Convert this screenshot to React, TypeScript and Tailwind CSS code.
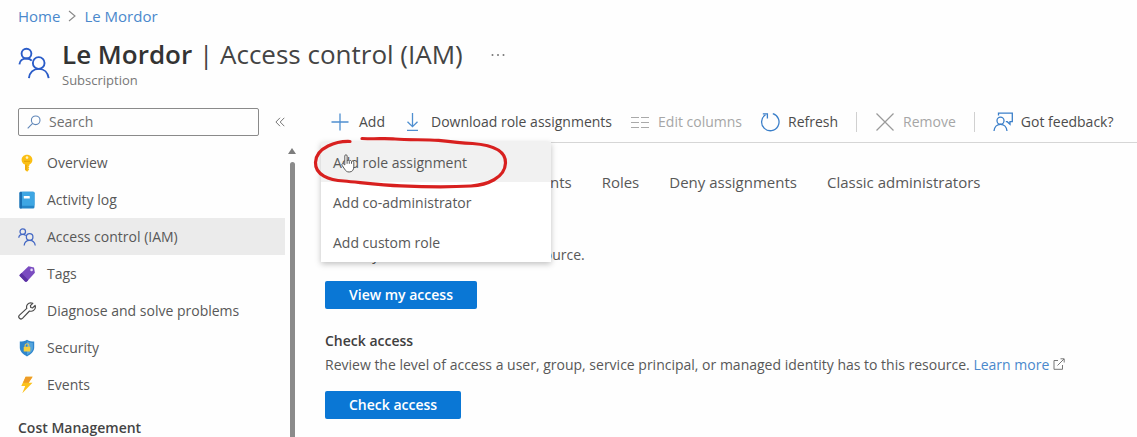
import type { ReactNode } from "react";

function PeopleIcon({ className, strokeWidth = 2 }: { className: string; strokeWidth?: number }) {
  return (
    <svg viewBox="0 0 34 34" className={className} fill="none" stroke="currentColor" strokeWidth={strokeWidth} aria-hidden="true">
      <circle cx="9" cy="7" r="5.2" />
      <path d="M1.500 18.500C1.800 14.500 5 12.200 9 12.200c2.200 0 4.200.7 5.600 2.200" />
      <circle cx="22" cy="17" r="6.2" />
      <path d="M11.600 33c.6-5.800 4.700-9.800 10.400-9.800S31.800 27.200 32.600 33" />
    </svg>
  );
}

function KeyIcon() {
  return (
    <svg viewBox="0 0 18 18" className="size-[18px]" aria-hidden="true">
      <path d="M9 .8c3.100 0 5.400 2.200 5.400 5.100 0 2.200-1.200 3.800-3 4.600v1l-1 1 1 1-1 1.100.8 1-2 2.200L7 15.900V10.500C5 9.800 3.600 8.100 3.600 5.900 3.600 3 5.900.8 9 .8Z" fill="#fbbf14" />
      <path d="M7.400 10.800h1.100v5.600l-1.100-.9Z" fill="#e49a0c" />
      <circle cx="9" cy="3.600" r="1.300" fill="#fff3c2" />
      <path d="M6 7.300h6" stroke="#e5a000" strokeWidth="1" />
    </svg>
  );
}

function LogIcon() {
  return (
    <svg viewBox="0 0 18 18" className="size-[18px]" aria-hidden="true">
      <rect x="1.500" y=".8" width="15" height="16.600" rx="1.500" fill="#2585c7" />
      <rect x="3.600" y=".8" width="12.900" height="14" rx="1" fill="#3ea6e3" />
      <rect x="1.500" y=".8" width="2.500" height="16.600" rx="1" fill="#1a6fb2" />
      <rect x="5.800" y="5" width="6" height="2.600" rx=".4" fill="#fff" />
    </svg>
  );
}

function TagIcon() {
  return (
    <svg viewBox="0 0 18 18" className="size-[18px]" aria-hidden="true">
      <path d="M10.500 1.300 16 2.400l.9 5.400-8 8.600c-.6.6-1.300.6-1.900 0L2 11.300c-.6-.6-.6-1.300 0-1.900Z" fill="#7a4cc0" />
      <path d="M2 9.400c-.6.6-.6 1.300 0 1.900l5 5.100c.6.6 1.300.6 1.900 0l1.400-1.500L3.500 8Z" fill="#5b32a3" />
      <circle cx="13.600" cy="4.900" r="1.300" fill="#e7dcf8" />
    </svg>
  );
}

function WrenchIcon() {
  return (
    <svg viewBox="0 0 18 18" className="size-[18px]" fill="none" stroke="#4b4b4b" strokeWidth="1.200" strokeLinejoin="round" aria-hidden="true">
      <path d="M14.800 1.300 12.400 3.700l.4 1.800 1.800.4 2.500-2.400c.6 2-.1 4.100-1.700 5.100-1.200.8-2.600.8-3.900.4l-6.800 7.200c-.9.9-2.300.9-3.200.1-.9-.9-.9-2.300 0-3.200l7.300-6.700c-.5-1.400-.2-2.900.7-4C10.800.9 12.900.5 14.800 1.300Z" />
    </svg>
  );
}

function ShieldIcon() {
  return (
    <svg viewBox="0 0 18 18" className="size-[18px]" aria-hidden="true">
      <path d="M9 .8c2.400 1.500 4.600 1.700 7.200 1.800v6c0 4-3.400 6.900-7.200 8.900-3.800-2-7.200-4.900-7.200-8.900v-6C4.400 2.500 6.600 2.300 9 .8Z" fill="#2f86cc" />
      <path d="M9 2.300c2 1.100 3.800 1.400 5.900 1.600v4.800c0 3.200-2.700 5.500-5.900 7.200Z" fill="#55a5dd" />
      <path d="M7.100 8V6.700a1.900 1.900 0 0 1 3.800 0V8" stroke="#e3c65b" strokeWidth="1.100" fill="none" />
      <rect x="5.700" y="7.800" width="6.600" height="4.800" rx=".6" fill="#f6cf3f" />
    </svg>
  );
}

function BoltIcon() {
  return (
    <svg viewBox="0 0 18 18" className="size-[18px]" aria-hidden="true">
      <path d="M7.600.8h7L10.600 6.700h3.900L4.300 17.300l2.900-7.200H3.300Z" fill="#fcc21c" />
      <path d="M7.600.8h7L10.600 6.700H5.100Z" fill="#ee9b28" />
    </svg>
  );
}

function SearchIcon() {
  return (
    <svg viewBox="0 0 14 14" className="size-[14px]" fill="none" stroke="#5f86b8" strokeWidth="1.100" aria-hidden="true">
      <circle cx="8.700" cy="5.300" r="4.300" />
      <path d="M5.600 8.400.7 13.300" />
    </svg>
  );
}

function PlusIcon() {
  return (
    <svg viewBox="0 0 20 20" className="size-5" stroke="#4f8fd0" strokeWidth="1.300" aria-hidden="true">
      <path d="M9 1.500v17M.5 10h17" />
    </svg>
  );
}

function DownloadIcon() {
  return (
    <svg viewBox="0 0 20 20" className="size-5" fill="none" stroke="#4f8fd0" strokeWidth="1.300" aria-hidden="true">
      <path d="M9.500 1v13.500M4.500 9.700l5 5 5-5M4 18.300h11" />
    </svg>
  );
}

function ColumnsIcon() {
  return (
    <svg viewBox="0 0 20 14" className="h-[14px] w-5" stroke="#a9a9a9" strokeWidth="1.100" aria-hidden="true">
      <path d="M1 2.500h8M11 2.500h8M1 7.500h8M11 7.500h8M1 12.500h8M11 12.500h8" />
    </svg>
  );
}

function RefreshIcon() {
  return (
    <svg viewBox="0 0 20 20" className="size-5" fill="none" stroke="#3b7fc9" strokeWidth="1.300" aria-hidden="true">
      <path d="M12.800 1.700A8.700 8.700 0 1 1 5.500 2.800" />
      <path d="M2.800 1.800h4.600v4.600" />
    </svg>
  );
}

function RemoveIcon() {
  return (
    <svg viewBox="0 0 20 20" className="size-5" stroke="#9a9a9a" strokeWidth="1.200" aria-hidden="true">
      <path d="m1.500 1.500 17 17M18.500 1.500l-17 17" />
    </svg>
  );
}

function FeedbackIcon() {
  return (
    <svg viewBox="0 0 20 20" className="size-5" fill="none" stroke="#3b7fc9" strokeWidth="1.300" aria-hidden="true">
      <circle cx="7.500" cy="8.700" r="3.500" />
      <path d="M1 19c.3-3.900 2.900-6.700 6.500-6.700s6.200 2.800 6.500 6.700" />
      <path d="M5.500 3.500V1.200h13.800v8.500h-2.300v2.600l-2.800-2.600h-1.400" />
    </svg>
  );
}

function ExternalIcon() {
  return (
    <svg viewBox="0 0 12 12" className="mb-1 inline-block size-3" fill="none" stroke="#777" strokeWidth="1" aria-hidden="true">
      <path d="M5 2.500H1v8.800h8.500V7M4.500 7.500l6.500-6.500M7.500.8h3.700v3.700" />
    </svg>
  );
}

function HandCursor() {
  return (
    <svg viewBox="0 0 14 19" className="pointer-events-none absolute left-5 top-3 h-[19px] w-[14px]" fill="#fff" stroke="#5a5a5a" strokeWidth="1" strokeLinejoin="round" aria-hidden="true">
      <path d="M3.800 11V2c0-1.700 2.300-1.700 2.300 0v5c.2-1.200 2-1.100 2.200.1.400-1 2-.8 2.200.4.500-.8 2.300-.5 2.300 1v4.300c0 3-1.500 5.200-4.600 5.200-2.300 0-3.400-1-4.600-2.900L1 11.200c-.6-1.200.7-2.100 1.600-1.300Z" />
      <path d="M6.100 7v2.800M8.300 7.200v2.600M10.500 7.800v2" />
    </svg>
  );
}

function Highlight() {
  return (
    <svg viewBox="0 0 200 56" className="pointer-events-none absolute -left-2 -top-1.5 h-14 w-[200px]" fill="none" stroke="#d8201f" strokeWidth="3.200" strokeLinecap="round" aria-hidden="true">
      <path d="M37 5.500C24 5 3 11 2.500 26.500 2 39 16 44 31 45c17 1.500 37 4.500 57 4.800 25 1.200 53 1.200 70 .2 16-1 34-8 34.500-23 .5-13-14-18-33-19.500-13-.8-22-1.800-34-3.200C110 3.500 95 4 82 3c-9-.8-20 .2-33-.5" />
    </svg>
  );
}

const sideItems: { label: string; icon: ReactNode; active?: boolean }[] = [
  { label: "Overview", icon: <KeyIcon /> },
  { label: "Activity log", icon: <LogIcon /> },
  { label: "Access control (IAM)", icon: <PeopleIcon className="size-[18px] text-[#4468c4]" strokeWidth={2.400} />, active: true },
  { label: "Tags", icon: <TagIcon /> },
  { label: "Diagnose and solve problems", icon: <WrenchIcon /> },
  { label: "Security", icon: <ShieldIcon /> },
  { label: "Events", icon: <BoltIcon /> },
];

const tabs = ["Check access", "Role assignments", "Roles", "Deny assignments", "Classic administrators"];
const menuItems = ["Add role assignment", "Add co-administrator", "Add custom role"];

function ToolButton({ icon, label, disabled }: { icon: ReactNode; label: string; disabled?: boolean }) {
  return (
    <button type="button" disabled={disabled} className="flex items-center gap-2 whitespace-nowrap text-[#4c4c4c] disabled:text-[#a6a6a6]">
      {icon}
      {label}
    </button>
  );
}

function Sidebar() {
  return (
    <aside className="flex w-[295px] shrink-0 flex-col">
      <div className="flex items-center gap-4 pl-[18px]">
        <label className="flex h-7 w-[241px] items-center gap-2 rounded-xs border border-[#8a8a8a] pl-2 pr-2">
          <SearchIcon />
          <input type="text" placeholder="Search" aria-label="Search" className="min-w-0 flex-1 bg-transparent outline-none placeholder:text-[#707070]" />
        </label>
        <button type="button" aria-label="Collapse menu" className="text-[#777]">
          <svg viewBox="0 0 10 10" className="size-[10px]" fill="none" stroke="currentColor" strokeWidth="1" aria-hidden="true">
            <path d="M5 .8.900 5 5 9.200M9.300.8 5.200 5l4.100 4.200" />
          </svg>
        </button>
      </div>
      <div className="mt-2 flex justify-between">
        <nav className="w-[285px]">
          <ul>
            {sideItems.map((item) => (
              <li key={item.label}>
                <a href="#" aria-current={item.active ? "page" : undefined} className={`flex h-[37px] items-center gap-[11px] pl-[18px] ${item.active ? "bg-[#ebebeb]" : ""}`}>
                  {item.icon}
                  {item.label}
                </a>
              </li>
            ))}
          </ul>
          <h2 className="mt-[15px] pl-[18px] font-semibold text-[#444]">Cost Management</h2>
        </nav>
        <div className="flex w-[6px] flex-col items-center gap-2 pt-1" aria-hidden="true">
          <svg viewBox="0 0 8 6" className="h-[6px] w-2 shrink-0 fill-[#7d7d7d]">
            <path d="M4 0 8 6H0Z" />
          </svg>
          <div className="w-[5px] flex-1 rounded-t-full bg-[#8b8b8b]" />
        </div>
      </div>
    </aside>
  );
}

export default function App() {
  return (
    <div className="flex h-screen flex-col overflow-hidden bg-[#fefefe] font-['Open_Sans','Noto_Sans',sans-serif] text-[14px] leading-5 text-[#585858]">
      <nav aria-label="Breadcrumb" className="flex items-center gap-2 pl-[18px] pt-1.5 text-[15px] text-[#4a88cc]">
        <a href="#">Home</a>
        <svg viewBox="0 0 8 12" className="h-3 w-2" fill="none" stroke="#888" strokeWidth="1.100" aria-hidden="true">
          <path d="m1 1 6 5-6 5" />
        </svg>
        <a href="#">Le Mordor</a>
      </nav>
      <header className="flex items-start gap-3 pl-[18px] pt-3">
        <PeopleIcon className="mt-2 h-[34px] w-8 shrink-0 text-[#2a5cc8]" />
        <div>
          <h1 className="text-[26px] leading-8 text-[#444]">
            <span className="font-semibold text-[#333]">Le Mordor</span> | Access control (IAM)
          </h1>
          <p className="text-[13px] text-[#777]">Subscription</p>
        </div>
        <button type="button" aria-label="More actions" className="ml-4 mt-4 text-[#777]">
          <svg viewBox="0 0 14 2" className="h-0.5 w-[14px] fill-current" aria-hidden="true">
            <circle cx="1.500" cy="1" r="1" />
            <circle cx="7" cy="1" r="1" />
            <circle cx="12.500" cy="1" r="1" />
          </svg>
        </button>
      </header>
      <div className="mt-[18px] flex flex-1 items-stretch">
        <Sidebar />
        <main className="ml-[30px] min-w-0 flex-1">
          <div className="relative flex h-[35px] items-center gap-[18px] border-b border-[#d6d6d6] pb-1.5 pl-1.5">
            <ToolButton icon={<PlusIcon />} label="Add" />
            <ToolButton icon={<DownloadIcon />} label="Download role assignments" />
            <ToolButton icon={<ColumnsIcon />} label="Edit columns" disabled />
            <ToolButton icon={<RefreshIcon />} label="Refresh" />
            <span className="h-5 w-px bg-[#d0d0d0]" />
            <ToolButton icon={<RemoveIcon />} label="Remove" disabled />
            <span className="h-5 w-px bg-[#d0d0d0]" />
            <ToolButton icon={<FeedbackIcon />} label="Got feedback?" />
            <div className="absolute -left-1 top-full z-10 w-[230px] bg-white shadow-[0_2px_6px_rgba(0,0,0,0.25)]">
              <ul role="menu">
                {menuItems.map((label, index) => (
                  <li key={label} role="none">
                    <button type="button" role="menuitem" className={`flex h-10 w-full items-center px-3 pt-px ${index === 0 ? "bg-[#f1f1f1]" : ""}`}>
                      {label}
                    </button>
                  </li>
                ))}
              </ul>
              <HandCursor />
              <Highlight />
            </div>
          </div>
          <div role="tablist" className="-ml-3 flex h-[78px] items-center text-[15px]">
            {tabs.map((label, index) => (
              <button key={label} type="button" role="tab" aria-selected={index === 0} className="whitespace-nowrap px-[15px]">
                {label}
              </button>
            ))}
          </div>
          <section className="pt-6">
            <p>View my level of access to this resource.</p>
            <button type="button" className="mt-4 h-7 rounded-xs bg-[#0a77d5] px-6 font-semibold text-white">View my access</button>
          </section>
          <section className="mt-[22px]">
            <h2 className="font-semibold text-[#3f3f3f]">Check access</h2>
            <p className="mt-1 whitespace-nowrap">
              Review the level of access a user, group, service principal, or managed identity has to this resource.{" "}
              <a href="#" className="text-[#4a88cc]">
                Learn more <ExternalIcon />
              </a>
            </p>
            <button type="button" className="mt-4 h-7 rounded-xs bg-[#0a77d5] px-6 font-semibold text-white">Check access</button>
          </section>
        </main>
      </div>
    </div>
  );
}
